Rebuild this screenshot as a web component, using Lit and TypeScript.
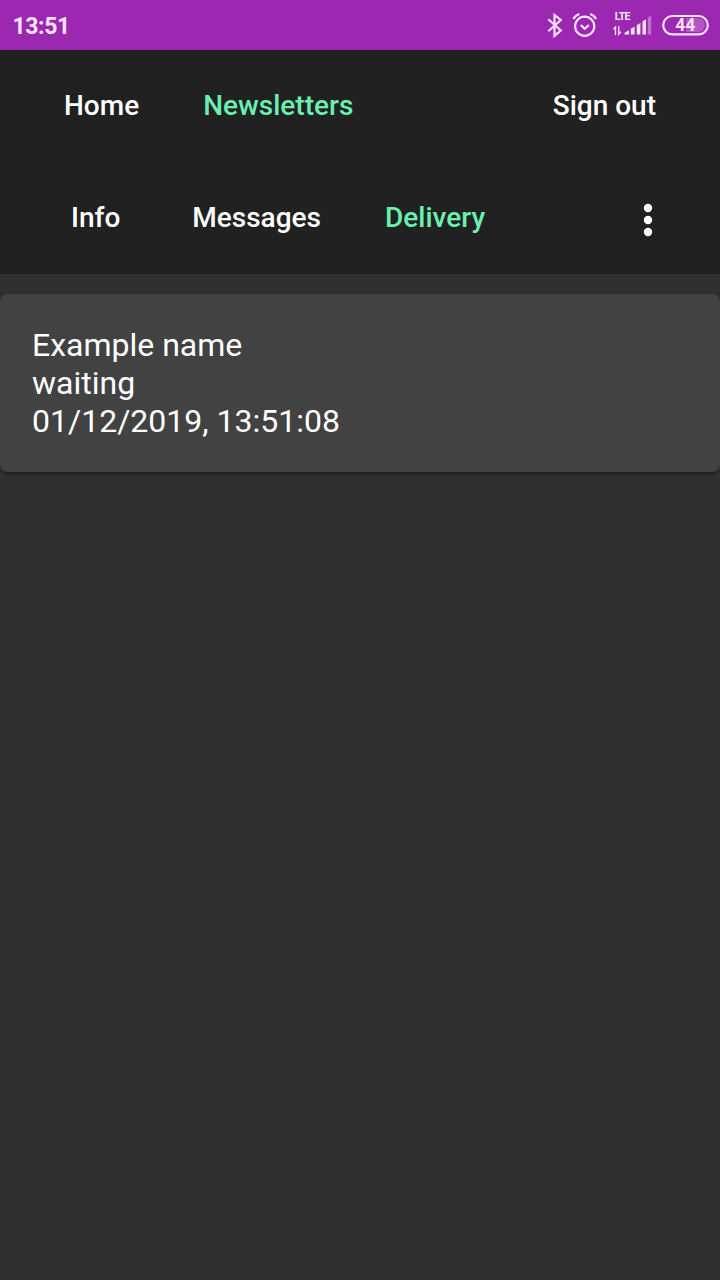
import { LitElement, html, css } from "lit";
import { customElement } from "lit/decorators.js";

@customElement("app-root")
export class AppRoot extends LitElement {
  static styles = css`
    :host { display: block; min-height: 1280px; background: #303030; color: #fff; font-family: Roboto, sans-serif; }
    .status { height: 50px; background: #9c27b0; display: flex; align-items: center; justify-content: space-between; color: #fbe4ff; }
    .time { font-size: 23px; font-weight: 700; letter-spacing: -0.4px; padding: 2px 0 0 12.5px; }
    .status svg { display: block; }
    .lte { font: 700 10.5px Roboto, sans-serif; letter-spacing: -0.6px; }
    .bars { background: #212121; height: 224px; }
    .bar { height: 112px; display: flex; align-items: center; box-sizing: border-box; font-size: 28px; font-weight: 500; line-height: 36px; }
    .first { padding: 0 64px; }
    .second { padding: 0 64px 0 71px; }
    .gap { margin-left: 64px; }
    .wide { margin-left: 72px; }
    .end { margin-left: auto; }
    .active { color: #69f0ae; }
    .dots { margin-left: auto; margin-top: 4px; }
    .card { margin-top: 20px; height: 178px; box-sizing: border-box; padding: 32px; background: #424242; border-radius: 8px; font-size: 32px; line-height: 38px; box-shadow: 0 4px 2px -2px rgba(0,0,0,.2), 0 2px 2px rgba(0,0,0,.14), 0 2px 6px rgba(0,0,0,.12); }
  `;
  render() {
    return html`
      <header class="status">
        <span class="time">13:51</span>
        <svg width="180" height="50" viewBox="540 0 180 50" fill="none" stroke="#fbe4ff" stroke-width="2.2">
          <path d="M548.3 19.2L560.8 30.5L554.5 35.8V15L560.8 20L548.3 31.3" />
          <circle cx="584.7" cy="26.3" r="9.6" />
          <path d="M580.8 25L584.7 28.8L588.8 25" />
          <path d="M573.5 19Q575 15.5 579.3 14M596 19Q594.5 15.5 590.2 14" />
          <text class="lte" x="614.8" y="20" fill="#fbe4ff" stroke="none">LTE</text>
          <path d="M615.5 35V27L613.4 29.4M618.7 26.2V34.2L620.8 31.8" stroke-width="1.4" />
          <g fill="#fbe4ff" stroke="none">
            <path d="M624.5 34.5V33L629 30.2V34.5zM630.8 34.5V28.8L634.6 26.8V34.5zM636.8 34.5V25.3L640.4 22.9V34.5zM642.5 34.5V21.6L646 19.2V34.5z" />
            <path d="M647.8 34.5V17.8L651.2 15.2V34.5z" opacity=".4" />
            <path d="M686 18H698A7 7 0 0 1 698 32H686z" opacity=".25" />
          </g>
          <rect x="663.2" y="16" width="44.6" height="18.4" rx="9.2" />
          <text x="675.2" y="31" font-size="17.5" font-weight="700" fill="#fbe4ff" stroke="none">44</text>
        </svg>
      </header>
      <nav class="bars">
        <div class="bar first"><span>Home</span><span class="gap active">Newsletters</span><span class="end">Sign out</span></div>
        <div class="bar second"><span>Info</span><span class="wide">Messages</span><span class="gap active">Delivery</span>
          <svg class="dots" width="16" height="36" fill="#fff"><circle cx="8" cy="6" r="4.2" /><circle cx="8" cy="18" r="4.2" /><circle cx="8" cy="30" r="4.2" /></svg>
        </div>
      </nav>
      <main class="card"><div>Example name</div><div>waiting</div><div>01/12/2019, 13:51:08</div></main>`;
  }
}
